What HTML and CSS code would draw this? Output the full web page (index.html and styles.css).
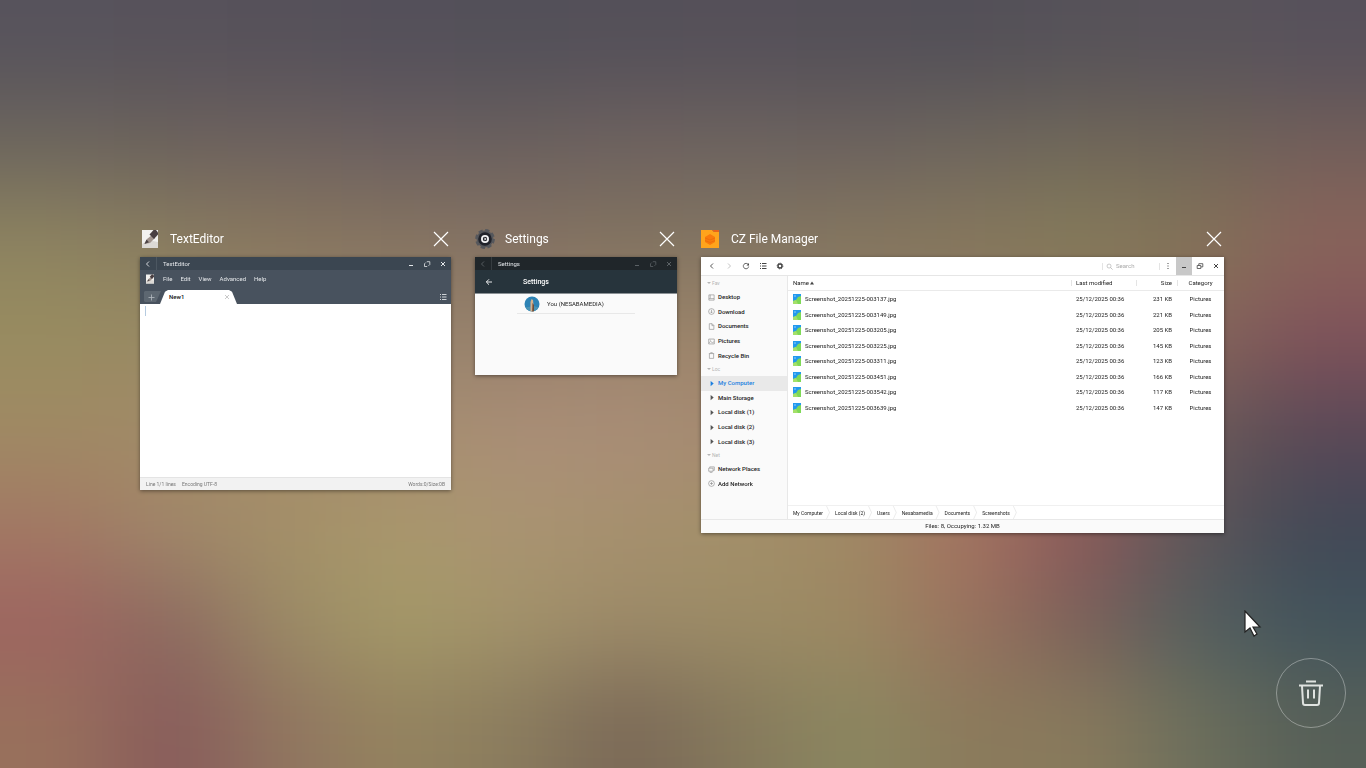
FILE: index.html
```html
<!DOCTYPE html>
<html lang="en">
<head>
  <meta charset="utf-8">
  <title>Task overview</title>
  <link rel="stylesheet" href="styles.css">
</head>
<body>
  <!-- Blurred wallpaper, filled in by the script at the bottom -->
  <svg class="wallpaper" viewBox="0 0 12 8" preserveAspectRatio="none" aria-hidden="true">
    <filter id="soft" x="-0.2" y="-0.2" width="1.4" height="1.4" color-interpolation-filters="sRGB">
      <feGaussianBlur stdDeviation="0.42 0.46"/>
    </filter>
    <g id="patches" filter="url(#soft)"></g>
  </svg>

  <!-- Shared icons -->
  <svg class="sprite" aria-hidden="true">
    <symbol id="i-close-big" viewBox="0 0 16 16"><path d="M1 1l14 14M15 1L1 15" fill="none" stroke="#fff" stroke-width="1.2"/></symbol>
    <symbol id="i-back" viewBox="0 0 8 8"><path d="M5 1.5L2.5 4 5 6.500" fill="none" stroke="currentColor" stroke-width="0.9"/></symbol>
    <symbol id="i-forward" viewBox="0 0 8 8"><path d="M3 1.500L5.500 4 3 6.500" fill="none" stroke="currentColor" stroke-width="0.9"/></symbol>
    <symbol id="i-min" viewBox="0 0 8 8"><path d="M2 5.500h4" stroke="currentColor"/></symbol>
    <symbol id="i-max" viewBox="0 0 8 8"><path d="M3.800 1.700h3v2.800M4.200 6.500H1.500V3.800M1.500 3.800l1.300-1.300M6.800 4.500L5.500 5.800" fill="none" stroke="currentColor" stroke-width="0.8"/></symbol>
    <symbol id="i-close" viewBox="0 0 8 8"><path d="M2 2l4 4M6 2L2 6" stroke="currentColor"/></symbol>
    <symbol id="i-list" viewBox="0 0 8 8"><path d="M1 1.500h1M1 4h1M1 6.500h1M3 1.500h4.500M3 4h4.500M3 6.500h4.500" stroke="currentColor"/></symbol>
    <symbol id="i-editor" viewBox="0 0 18 20">
      <path d="M1 1h16v18H1z" fill="#f3f2f0"/>
      <path d="M1 15l6-4 10 2v6H1z" fill="#dcd9d5"/>
      <path d="M3.500 15l2.500-5 5-4 3 3-5 5z" fill="#a2958f"/>
      <path d="M3.500 15l2-4.500 2.500 2.700z" fill="#4a4244"/>
      <path d="M8.500 5.500L12.500 1H15l2 2.500v2L13 10z" fill="#493f42"/>
    </symbol>
    <symbol id="i-picture" viewBox="0 0 8 10">
      <path d="M0 0h8v10H0z" fill="#2299ee"/>
      <path d="M0 10V7l3-1 2-3 3-1v8z" fill="#7ed957"/>
      <path d="M0 7l3-1 2 4H0z" fill="#a4e069"/>
      <circle cx="2" cy="2" r="1" fill="#6cbcf8"/>
    </symbol>
  </svg>

  <main class="overview">
    <section class="task">
      <header class="task-head">
        <svg class="app-icon"><use href="#i-editor"/></svg>
        <h2>TextEditor</h2>
        <button class="task-close" aria-label="Close TextEditor"><svg><use href="#i-close-big"/></svg></button>
      </header>
      <div class="window editor">
        <div class="titlebar">
          <button class="tool" aria-label="Back"><svg><use href="#i-back"/></svg></button>
          <span class="title">TextEditor</span>
          <button class="tool" aria-label="Minimize"><svg><use href="#i-min"/></svg></button>
          <button class="tool" aria-label="Maximize"><svg><use href="#i-max"/></svg></button>
          <button class="tool" aria-label="Close"><svg><use href="#i-close"/></svg></button>
        </div>
        <nav class="menu">
          <svg class="menu-icon"><use href="#i-editor"/></svg>
          <button>File</button>
          <button>Edit</button>
          <button>View</button>
          <button>Advanced</button>
          <button>Help</button>
        </nav>
        <div class="tabs">
          <button class="new-tab" aria-label="New tab"><svg viewBox="0 0 8 8"><path d="M1.500 4.500h6M4.500 1.500v6" stroke="#b4bac0" stroke-width="0.8"/></svg></button>
          <div class="tab">
            <span>New1</span>
            <button class="tool" aria-label="Close tab"><svg viewBox="0 0 8 8"><path d="M2 2l4 4M6 2L2 6" stroke="#bbb" stroke-width="0.8"/></svg></button>
          </div>
          <button class="tool tab-list" aria-label="Tab list"><svg><use href="#i-list"/></svg></button>
        </div>
        <div class="page">
          <textarea aria-label="Document text"></textarea>
        </div>
        <footer class="editor-status">
          <span>Line 1/1 lines</span>
          <span>Encoding UTF-8</span>
          <span class="words">Words:0/Size:0B</span>
        </footer>
      </div>
    </section>

    <section class="task">
      <header class="task-head">
        <svg class="app-icon" viewBox="0 0 20 20">
          <circle cx="10" cy="10" r="8.500" fill="#55575c"/>
          <circle cx="10" cy="10" r="8.800" fill="none" stroke="#55575c" stroke-width="2.200" stroke-dasharray="4.300 2.600"/>
          <circle cx="10" cy="10" r="6.800" fill="#20222a"/>
          <circle cx="10" cy="10" r="3.100" fill="#25272e" stroke="#f2f2f4" stroke-width="1.800"/>
          <path d="M9.500 8.500l2 1.500-2 1.500z" fill="#fff"/>
        </svg>
        <h2>Settings</h2>
        <button class="task-close" aria-label="Close Settings"><svg><use href="#i-close-big"/></svg></button>
      </header>
      <div class="window settings">
        <div class="titlebar">
          <button class="tool" aria-label="Back"><svg><use href="#i-back"/></svg></button>
          <span class="title">Settings</span>
          <button class="tool" aria-label="Minimize"><svg><use href="#i-min"/></svg></button>
          <button class="tool" aria-label="Maximize"><svg><use href="#i-max"/></svg></button>
          <button class="tool" aria-label="Close"><svg><use href="#i-close"/></svg></button>
        </div>
        <div class="settings-head">
          <button class="tool" aria-label="Up"><svg viewBox="0 0 8 8"><path d="M7 4H1.500M4 1.300L1.300 4 4 6.700" fill="none" stroke="#fff" stroke-width="0.9"/></svg></button>
          <h3>Settings</h3>
        </div>
        <div class="settings-body">
          <a class="account" href="#">
            <svg viewBox="0 0 16 16">
              <circle cx="8" cy="8" r="7.500" fill="#2d83b5"/>
              <path d="M1.500 11.500a7.500 7.500 0 0 0 13 0L10 10z" fill="#4b93b4"/>
              <path d="M6.500 6l1-3 1.500 1 .5 5 .5 6.200a7.500 7.500 0 0 1-3.500 0z" fill="#d6b08c"/>
              <path d="M8.500 7l1.500 2v6.200l-1.800.2z" fill="#6d4c3a"/>
            </svg>
            <span>You (NESABAMEDIA)</span>
          </a>
        </div>
      </div>
    </section>

    <section class="task">
      <header class="task-head">
        <svg class="app-icon" viewBox="0 0 20 20">
          <path d="M0 1h11l2 2h5v16H0z" fill="#ffa41c"/>
          <path d="M11 1h7v2h-5z" fill="#e8641b"/>
          <path d="M9 5l5 3v5l-5 3-5-3V8z" fill="#f97a0c"/>
          <path d="M4 9l5 2 5-2M4 11.500l5 2 5-2" fill="none" stroke="#e96a08" stroke-width="0.7"/>
        </svg>
        <h2>CZ File Manager</h2>
        <button class="task-close" aria-label="Close CZ File Manager"><svg><use href="#i-close-big"/></svg></button>
      </header>
      <div class="window files">
        <div class="toolbar">
          <button class="tool" aria-label="Back"><svg><use href="#i-back"/></svg></button>
          <button class="tool faded" aria-label="Forward"><svg><use href="#i-forward"/></svg></button>
          <button class="tool" aria-label="Refresh"><svg viewBox="0 0 8 8"><path d="M6.300 2.600A2.700 2.700 0 1 0 6.700 4.500" fill="none" stroke="currentColor" stroke-width="0.8"/><path d="M7 1v2.500H4.500z" fill="currentColor"/></svg></button>
          <button class="tool" aria-label="List view"><svg><use href="#i-list"/></svg></button>
          <button class="tool" aria-label="Options"><svg viewBox="0 0 8 8"><circle cx="4" cy="4" r="2" fill="none" stroke="currentColor" stroke-width="1.400"/><circle cx="4" cy="4" r="2.900" fill="none" stroke="currentColor" stroke-width="0.8" stroke-dasharray="1.200 1.080"/></svg></button>
          <label class="search">
            <svg viewBox="0 0 8 8"><circle cx="3.500" cy="3.500" r="2.300" fill="none" stroke="#aaa" stroke-width="0.7"/><path d="M5.200 5.200L7.500 7.500" stroke="#aaa" stroke-width="0.8"/></svg>
            <input type="text" placeholder="Search" aria-label="Search">
          </label>
          <button class="tool win" aria-label="More"><svg viewBox="0 0 8 8"><path d="M3.500 1h1v1h-1zM3.500 3.500h1v1h-1zM3.500 6h1v1h-1z" fill="currentColor"/></svg></button>
          <button class="tool win hover" aria-label="Minimize"><svg><use href="#i-min"/></svg></button>
          <button class="tool win" aria-label="Restore"><svg viewBox="0 0 8 8"><path d="M1.200 3.500h3.600v3H1.200zM2.800 3.500V1.700h4v3.200H5" fill="none" stroke="currentColor" stroke-width="0.8"/></svg></button>
          <button class="tool win" aria-label="Close"><svg><use href="#i-close"/></svg></button>
        </div>

        <div class="files-main">
          <aside class="sidebar">
            <h4>Fav</h4>
            <ul class="five">
              <li><a href="#"><svg viewBox="0 0 8 8"><path d="M1 1h6v6H1zM1 5.300h6M2.500 1v4" /></svg>Desktop</a></li>
              <li><a href="#"><svg viewBox="0 0 8 8"><circle cx="4" cy="4" r="3.300"/><path d="M4 2v3.500M2.700 4.300L4 5.600l1.300-1.300"/></svg>Download</a></li>
              <li><a href="#"><svg viewBox="0 0 8 8"><path d="M1.500.8h3.200l2 2v4.500H1.500zM4.500 1v2h2"/></svg>Documents</a></li>
              <li><a href="#"><svg viewBox="0 0 8 8"><path d="M.8 1.200h6.400v5.600H.8zM1 5.500l2-1.500 2 1.300 2-1M2.200 2.600h1"/></svg>Pictures</a></li>
              <li><a href="#"><svg viewBox="0 0 8 8"><path d="M1 1.800h6M3 1.500V.8h2v.7M1.600 2v5.300h4.800V2"/></svg>Recycle Bin</a></li>
            </ul>
            <h4>Loc</h4>
            <ul class="five">
              <li class="active"><a href="#"><svg viewBox="0 0 8 8"><path class="solid" d="M3 1L6.500 4 3 7z"/></svg>My Computer</a></li>
              <li><a href="#"><svg viewBox="0 0 8 8"><path class="solid" d="M3 1L6.500 4 3 7z"/></svg>Main Storage</a></li>
              <li><a href="#"><svg viewBox="0 0 8 8"><path class="solid" d="M3 1L6.500 4 3 7z"/></svg>Local disk (1)</a></li>
              <li><a href="#"><svg viewBox="0 0 8 8"><path class="solid" d="M3 1L6.500 4 3 7z"/></svg>Local disk (2)</a></li>
              <li><a href="#"><svg viewBox="0 0 8 8"><path class="solid" d="M3 1L6.500 4 3 7z"/></svg>Local disk (3)</a></li>
            </ul>
            <h4>Net</h4>
            <ul class="two">
              <li><a href="#"><svg viewBox="0 0 8 8"><path d="M.8 2.500h5v3.500h-5zM2 2.300V1h5.200v4H6M2 7.300h3"/></svg>Network Places</a></li>
              <li><a href="#"><svg viewBox="0 0 8 8"><circle cx="4" cy="4" r="3.300"/><path d="M4 2.300v3.400M2.300 4h3.400"/></svg>Add Network</a></li>
            </ul>
          </aside>

          <div class="listing">
            <table>
              <thead>
                <tr><th>Name <svg class="sort" viewBox="0 0 4 4"><path d="M2 .5L4 3.500H0z"/></svg></th><th>Last modified</th><th>Size</th><th>Category</th></tr>
              </thead>
              <tbody>
                <tr><td><svg><use href="#i-picture"/></svg>Screenshot_20251225-003137.jpg</td><td>25/12/2025 00:36</td><td>231 KB</td><td>Pictures</td></tr>
                <tr><td><svg><use href="#i-picture"/></svg>Screenshot_20251225-003149.jpg</td><td>25/12/2025 00:36</td><td>221 KB</td><td>Pictures</td></tr>
                <tr><td><svg><use href="#i-picture"/></svg>Screenshot_20251225-003205.jpg</td><td>25/12/2025 00:36</td><td>205 KB</td><td>Pictures</td></tr>
                <tr><td><svg><use href="#i-picture"/></svg>Screenshot_20251225-003225.jpg</td><td>25/12/2025 00:36</td><td>145 KB</td><td>Pictures</td></tr>
                <tr><td><svg><use href="#i-picture"/></svg>Screenshot_20251225-003311.jpg</td><td>25/12/2025 00:36</td><td>123 KB</td><td>Pictures</td></tr>
                <tr><td><svg><use href="#i-picture"/></svg>Screenshot_20251225-003451.jpg</td><td>25/12/2025 00:36</td><td>166 KB</td><td>Pictures</td></tr>
                <tr><td><svg><use href="#i-picture"/></svg>Screenshot_20251225-003542.jpg</td><td>25/12/2025 00:36</td><td>117 KB</td><td>Pictures</td></tr>
                <tr><td><svg><use href="#i-picture"/></svg>Screenshot_20251225-003639.jpg</td><td>25/12/2025 00:36</td><td>147 KB</td><td>Pictures</td></tr>
              </tbody>
            </table>
            <nav class="crumbs">
              <a href="#">My Computer</a>
              <a href="#">Local disk (2)</a>
              <a href="#">Users</a>
              <a href="#">Nesabamedia</a>
              <a href="#">Documents</a>
              <a href="#">Screenshots</a>
            </nav>
          </div>
        </div>
        <footer class="files-status">Files: 8, Occupying: 1.32 MB</footer>
      </div>
    </section>
  </main>

  <button class="clear-all" aria-label="Close all windows">
    <svg viewBox="0 0 24 26"><path d="M7 1.500h10M0 5.500h24M3 6l1 17q0 2 2 2h12q2 0 2-2l1-17M9 9.500v9M15 9.500v9" fill="none" stroke="#e0e3e0" stroke-width="2"/></svg>
  </button>

  <svg class="pointer" viewBox="0 0 18 28"><path d="M1 1v21l5-4 4 8 3-2-4-7h7z" fill="#fff" stroke="#222" stroke-width="1.200"/></svg>

  <script>
    // One colour per patch, left to right, top to bottom
    const colors = [
      '57535c 57525b 56515a 54505a 535059 545059 555059 545058 535058 565259 59545a 57515b',
      '6d665d 6c625c 6e625f 6b6060 6a605e 6e625f 6d635f 6b625e 6e665d 706759 6f6459 725f5a',
      '8d8360 897c60 89775f 867460 847263 82735f 827562 85775f 87785d 857c5a 847459 8a645a',
      '988c60 988a64 96846a 96846c 98806c 9c846c 9a8468 907c64 8c7860 8a705c 86655a 80525a',
      'a08a64 a28a68 a48a6a a68c70 aa8f77 a98d78 a58a70 a0866a 967c62 8a6a5c 6a5a58 5a4857',
      'a27864 a0876a a49068 a9976c aa9472 a6906e a39069 9f8864 a57260 8c585a 5d5559 414856',
      '9d6460 8c6a60 9a8a66 a49968 a2926a 9c8a68 9c8c66 9c8862 98725e 7a605a 535f5e 42545d',
      '98705c 885b5b 907560 94835f 8a7c5e 7a6857 85795c 8b8760 8b7a5c 887a5c 6d6f5c 576058'
    ];
    const patches = document.getElementById('patches');
    colors.forEach((row, y) => {
      row.split(' ').forEach((color, x, cells) => {
        // patches on the rim run past the edge so the blur stays opaque
        const left = x === 0 ? -2 : x;
        const top = y === 0 ? -2 : y;
        const right = x === cells.length - 1 ? x + 3 : x + 1.02;
        const bottom = y === colors.length - 1 ? y + 3 : y + 1.02;
        const rect = document.createElementNS('http://www.w3.org/2000/svg', 'rect');
        rect.setAttribute('x', left);
        rect.setAttribute('y', top);
        rect.setAttribute('width', right - left);
        rect.setAttribute('height', bottom - top);
        rect.setAttribute('fill', '#' + color);
        patches.appendChild(rect);
      });
    });
  </script>
</body>
</html>
```
FILE: styles.css
```css
* {
  box-sizing: border-box;
}
body {
  margin: 0;
  min-height: 100vh;
  display: flex;
  align-items: center;
  font-family: Roboto, sans-serif;
  color: #222;
  background: #8b7a60;
}
h2, h3, h4, ul {
  margin: 0;
  padding: 0;
  font-weight: 400;
}
ul {
  list-style: none;
}
a {
  color: inherit;
  text-decoration: none;
}
button {
  padding: 0;
  border: 0;
  background: none;
  color: inherit;
  font: inherit;
}
.sprite {
  position: absolute;
  width: 0;
  height: 0;
}
.wallpaper {
  position: fixed;
  inset: 0;
  width: 100%;
  height: 100%;
  z-index: -1;
}

/* Task cards */
.overview {
  flex: 1;
  display: grid;
  grid-template-columns: 311fr 202fr 523fr;
  gap: 24px;
  align-items: start;
  padding: 0 142px 6px 140px;
}
.task-head {
  display: flex;
  align-items: center;
  gap: 10px;
  height: 20px;
  margin-bottom: 8px;
  color: #fff;
}
.task-head h2 {
  flex: 1;
  font-size: 12px;
  line-height: 20px;
}
.app-icon {
  width: 20px;
  height: 20px;
}
.task-close {
  width: 20px;
  height: 20px;
}
.task-close svg {
  display: block;
  width: 16px;
  height: 16px;
  margin: 2px;
}
.window {
  background: #fff;
  font-size: 6px;
  line-height: 8px;
  box-shadow: 0 1px 4px rgba(0, 0, 0, 0.45);
}
.tool {
  display: flex;
  align-items: center;
  justify-content: center;
  width: 16px;
}
.tool svg {
  width: 8px;
  height: 8px;
}
.titlebar {
  display: flex;
  height: 13px;
  line-height: 13px;
  color: #e4e7ea;
}
.titlebar .title {
  flex: 1;
  padding-left: 6px;
  border-left: 1px solid #4c5761;
}

/* Text editor */
.editor {
  background: #48525e;
}
.editor .titlebar {
  background: #3b4651;
}
.menu {
  display: flex;
  align-items: center;
  gap: 8px;
  height: 18px;
  padding-left: 5px;
  color: #e4e7ea;
}
.menu-icon {
  width: 10px;
  height: 10px;
}
.tabs {
  display: flex;
  align-items: flex-end;
  height: 16px;
  padding-left: 4px;
}
.new-tab {
  width: 17px;
  height: 11px;
  margin-bottom: 2px;
  background: #5d6771;
  clip-path: polygon(0 1px, 1px 0, 100% 0, 12px 100%, 1px 100%, 0 10px);
}
.new-tab svg {
  display: block;
  width: 8px;
  height: 8px;
  margin: 0 3px;
}
.tab {
  display: flex;
  align-items: center;
  justify-content: space-between;
  width: 77px;
  height: 14px;
  margin-left: -1px;
  padding: 0 2px 0 9px;
  background: #fff;
  color: #111;
  font-weight: 500;
  clip-path: polygon(0 100%, 5px 12%, 8px 0, 69px 0, 72px 12%, 100% 100%);
}
.tab-list {
  height: 15px;
  margin-left: auto;
  color: #cfd3d7;
}
.page {
  height: 173px;
  padding: 2px 5px;
  background: #fff;
}
.page textarea {
  display: block;
  width: 100%;
  height: 10px;
  padding: 0;
  border: 0;
  border-left: 1px solid #b5cbe0;
  resize: none;
  overflow: hidden;
  font: inherit;
}
.editor-status {
  display: flex;
  gap: 6px;
  height: 13px;
  padding: 0 6px;
  border-top: 1px solid #e4e4e4;
  background: #f2f2f2;
  color: #777;
  font-size: 5px;
  line-height: 12px;
}
.words {
  margin-left: auto;
}

/* Settings */
.settings .titlebar {
  background: #20262a;
}
.settings .tool {
  color: #5b6165;
}
.settings .titlebar .title {
  border-color: #363c40;
}
.settings-head {
  display: flex;
  align-items: center;
  gap: 26px;
  height: 24px;
  padding-left: 6px;
  border-bottom: 1px solid #8b9195;
  background: #27343c;
  color: #fff;
}
.settings-head h3 {
  font-size: 7px;
  font-weight: 500;
}
.settings-body {
  height: 81px;
  padding: 0 42px;
  background: #fafafa;
}
.account {
  display: flex;
  align-items: center;
  gap: 7px;
  height: 20px;
  padding-left: 7px;
  border-bottom: 1px solid #e8e8e8;
}
.account svg {
  width: 16px;
  height: 16px;
}

/* File manager */
.toolbar {
  display: flex;
  height: 19px;
  padding-left: 2px;
  border-bottom: 1px solid #e6e6e6;
  color: #444;
}
.toolbar .tool {
  width: 17px;
}
.toolbar .win {
  width: 16px;
}
.toolbar .faded {
  color: #bbb;
}
.toolbar .hover {
  background: #c8c8c8;
}
.search {
  display: flex;
  align-items: center;
  gap: 3px;
  width: 58px;
  margin-left: auto;
  padding-left: 4px;
  background: linear-gradient(#e4e4e4, #e4e4e4) 0 50% / 1px 7px no-repeat, linear-gradient(#e4e4e4, #e4e4e4) 100% 50% / 1px 7px no-repeat;
}
.search svg {
  flex: none;
  width: 7px;
  height: 7px;
}
.search input {
  width: 36px;
  padding: 0;
  border: 0;
  background: none;
  font: inherit;
}
.search input::placeholder {
  color: #aaa;
}
.files-main {
  display: flex;
}
.sidebar {
  width: 87px;
  padding-top: 1px;
  border-right: 1px solid #e8e8e8;
  background: #fafafa;
}
.sidebar h4 {
  height: 13px;
  padding-left: 6px;
  color: #b5b5b5;
  font-size: 5px;
  line-height: 13px;
}
.sidebar h4::before {
  content: "";
  display: inline-block;
  margin-right: 1px;
  border: 2px solid transparent;
  border-top-color: #b5b5b5;
  border-bottom: 0;
  vertical-align: 1px;
}
.sidebar ul {
  display: flex;
  flex-direction: column;
}
.sidebar li {
  flex: 1;
  display: flex;
}
.five {
  height: 73px;
}
.two {
  height: 29px;
}
.sidebar a {
  flex: 1;
  display: flex;
  align-items: center;
  gap: 3px;
  padding-left: 7px;
  font-weight: 500;
}
.sidebar a svg {
  width: 7px;
  height: 7px;
  fill: none;
  stroke: #888;
  stroke-width: 0.7;
}
.sidebar .solid {
  fill: #555;
  stroke: none;
}
.sidebar .active {
  background: #e9e9e9;
  color: #1c7fe0;
}
.sidebar .active .solid {
  fill: #1c7fe0;
}
.listing {
  flex: 1;
  display: flex;
  flex-direction: column;
  justify-content: space-between;
  height: 243px;
}
table {
  width: 100%;
  height: 139px;
  table-layout: fixed;
  border-collapse: collapse;
}
th, td {
  padding: 0 5px;
  text-align: left;
  font-weight: 400;
  white-space: nowrap;
}
th {
  height: 14px;
  border-bottom: 1px solid #eaeaea;
  background: linear-gradient(#e4e4e4, #e4e4e4) 0 50% / 1px 6px no-repeat;
}
th:first-child {
  background: none;
}
th:nth-child(2) {
  width: 65px;
}
th:nth-child(3) {
  width: 41px;
}
th:nth-child(4) {
  width: 47px;
}
th:nth-child(3), td:nth-child(3) {
  text-align: right;
}
th:nth-child(4), td:nth-child(4) {
  text-align: center;
}
td {
  padding-top: 1px;
}
td svg {
  width: 8px;
  height: 10px;
  margin-right: 4px;
  vertical-align: middle;
}
.sort {
  width: 4px;
  height: 4px;
  fill: #444;
}
.crumbs {
  display: flex;
  height: 14px;
  border-top: 1px solid #f0f0f0;
  font-size: 5px;
}
.crumbs a {
  display: flex;
  align-items: center;
  padding-left: 5px;
}
.crumbs a::after {
  content: "";
  width: 6px;
  height: 13px;
  margin-left: 1px;
  background: #ececec;
  clip-path: polygon(2px 0, 3px 0, 6px 50%, 3px 100%, 2px 100%, 5px 50%);
}
.files-status {
  height: 14px;
  border-top: 1px solid #e8e8e8;
  background: #fafafa;
  line-height: 12px;
  text-align: center;
}

.clear-all {
  position: fixed;
  right: 20px;
  bottom: 40px;
  width: 70px;
  height: 70px;
  border: 1px solid rgba(255, 255, 255, 0.35);
  border-radius: 50%;
}
.clear-all svg {
  width: 24px;
  height: 26px;
  vertical-align: middle;
}
.pointer {
  position: absolute;
  left: 1244px;
  top: 610px;
  width: 18px;
  height: 28px;
}
```
